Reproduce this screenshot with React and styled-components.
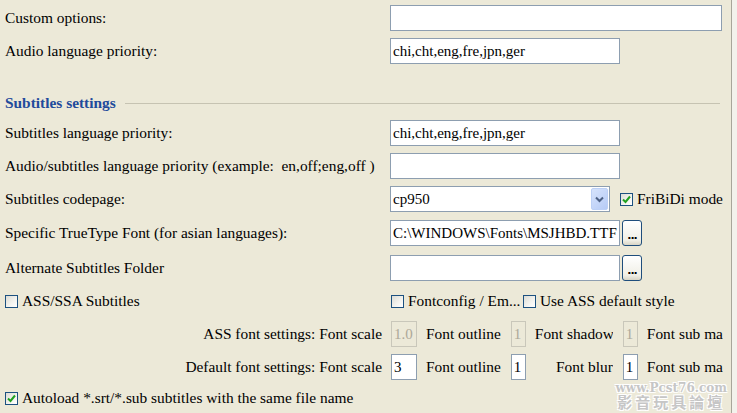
import React from 'react'
import styled, { createGlobalStyle } from 'styled-components'

const GlobalStyle = createGlobalStyle`
  html, body {
    margin: 0;
    padding: 0;
    background: #f3f2ec;
  }
  body {
    font-family: "Liberation Serif", "Times New Roman", serif;
    font-size: 15.4px;
    color: #000;
  }
`

const Panel = styled.div`
  position: relative;
  width: 732px;
  height: 413px;
  overflow: hidden;
  box-sizing: border-box;
  background: #ece9d8;
  border-right: 1px solid #a8a69a;
  padding: 5px 0 0 5px;
  display: flex;
  flex-direction: column;
  gap: 7px;
`

const Row = styled.div`
  display: flex;
  align-items: center;
  height: ${p => p.$h || 26}px;
  margin-top: ${p => p.$mt || 0}px;
  white-space: nowrap;
`

const Label = styled.div`
  width: 385px;
  flex: none;
  text-align: ${p => (p.$right ? 'right' : 'left')};
  padding-right: ${p => (p.$right ? 8 : 0)}px;
  box-sizing: border-box;
`

const Input = styled.div`
  flex: none;
  box-sizing: border-box;
  width: ${p => p.$w}px;
  height: 26px;
  border: 1px solid ${p => (p.$disabled ? '#c9c7ba' : '#8d9eb0')};
  background: ${p => (p.$disabled ? '#ece9d8' : '#fff')};
  color: ${p => (p.$disabled ? '#aca899' : '#000')};
  padding-left: 2px;
  font-size: 15px;
  line-height: 24px;
  overflow: hidden;
  margin-left: ${p => p.$ml || 0}px;
`

const Combo = styled.div`
  flex: none;
  box-sizing: border-box;
  width: 220px;
  height: 26px;
  border: 1px solid #8d9eb0;
  background: #fff;
  display: flex;
  align-items: center;
  justify-content: space-between;
  padding: 1px 1px 1px 2px;
  font-size: 15px;
`

const DropButton = styled.div`
  width: 17px;
  height: 22px;
  box-sizing: border-box;
  border: 1px solid #bcd0f6;
  border-radius: 2px;
  background: linear-gradient(135deg, #d6e3fc 0%, #b6cbf6 100%);
  display: flex;
  align-items: center;
  justify-content: center;
`

const BrowseButton = styled.div`
  flex: none;
  box-sizing: border-box;
  width: 20px;
  height: 26px;
  margin-left: 2px;
  border: 1px solid #1f4e7c;
  border-radius: 3px;
  background: linear-gradient(#ffffff, #f0efe6 80%, #d8d5c6);
  font-family: "DejaVu Sans", sans-serif;
  font-weight: bold;
  font-size: 11px;
  line-height: 30px;
  text-align: center;
  letter-spacing: -1px;
`

const CheckWrap = styled.label`
  display: flex;
  align-items: center;
  gap: 4px;
  flex: none;
  margin-left: ${p => p.$ml || 0}px;
  width: ${p => (p.$w ? `${p.$w}px` : 'auto')};
`

const Box = styled.span`
  width: 13px;
  height: 13px;
  box-sizing: border-box;
  border: 1px solid #1c5180;
  background: linear-gradient(135deg, #dcdcd5 0%, #f4f4f0 60%, #ffffff 100%);
  display: flex;
  align-items: center;
  justify-content: center;
`

const Header = styled.div`
  display: flex;
  align-items: center;
  height: 20px;
  margin-top: 22px;
  padding-right: 11px;
  color: #1f4b9c;
  font-weight: bold;
  &::after {
    content: '';
    flex: 1;
    height: 1px;
    margin-left: 9px;
    background: #c6c3b2;
  }
`

const Text = styled.span`
  flex: none;
  margin-left: ${p => p.$ml || 0}px;
  width: ${p => (p.$w ? `${p.$w}px` : 'auto')};
  text-align: ${p => (p.$right ? 'right' : 'left')};
  overflow: hidden;
`

const Watermark = styled.div`
  position: absolute;
  right: 4px;
  bottom: 2px;
  text-align: center;
  color: #c6c6c6;
  font-family: "DejaVu Serif", "Noto Sans CJK TC", serif;
  font-weight: bold;
  line-height: 15px;
  text-shadow: 1px 1px 0 #fff, -1px -1px 0 #fff, 1px -1px 0 #fff, -1px 1px 0 #fff;
  div:first-child { font-size: 12px; }
  div:last-child { font-size: 15px; letter-spacing: 3px; }
`

const Checkbox = ({ checked, children, ml, w }) => (
  <CheckWrap $ml={ml} $w={w}>
    <Box>
      {checked && (
        <svg width="9" height="9" viewBox="0 0 9 9">
          <path d="M1 4.5 L3.5 7 L8 1.5" stroke="#21a121" strokeWidth="2" fill="none" />
        </svg>
      )}
    </Box>
    <span>{children}</span>
  </CheckWrap>
)

export default function App() {
  return (
    <>
      <GlobalStyle />
      <Panel>
        <Row>
          <Label>Custom options:</Label>
          <Input $w={332} />
        </Row>
        <Row>
          <Label>Audio language priority:</Label>
          <Input $w={230}>chi,cht,eng,fre,jpn,ger</Input>
        </Row>

        <Header>Subtitles settings</Header>

        <Row>
          <Label>Subtitles language priority:</Label>
          <Input $w={230}>chi,cht,eng,fre,jpn,ger</Input>
        </Row>
        <Row>
          <Label>Audio/subtitles language priority (example:&nbsp; en,off;eng,off )</Label>
          <Input $w={230} />
        </Row>
        <Row>
          <Label>Subtitles codepage:</Label>
          <Combo>
            <span>cp950</span>
            <DropButton>
              <svg width="9" height="7" viewBox="0 0 9 7">
                <path d="M1 1.5 L4.5 5 L8 1.5" stroke="#4d6185" strokeWidth="2" fill="none" />
              </svg>
            </DropButton>
          </Combo>
          <Checkbox checked ml={10}>FriBiDi mode</Checkbox>
        </Row>
        <Row $mt={1}>
          <Label>Specific TrueType Font (for asian languages):</Label>
          <Input $w={230}>C:\WINDOWS\Fonts\MSJHBD.TTF</Input>
          <BrowseButton>...</BrowseButton>
        </Row>
        <Row $mt={2}>
          <Label>Alternate Subtitles Folder</Label>
          <Input $w={230} />
          <BrowseButton>...</BrowseButton>
        </Row>
        <Row>
          <Label>
            <Checkbox>ASS/SSA Subtitles</Checkbox>
          </Label>
          <Checkbox ml={1} w={132}>Fontconfig / Em...</Checkbox>
          <Checkbox>Use ASS default style</Checkbox>
        </Row>
        <Row>
          <Label $right>ASS font settings: Font scale</Label>
          <Input $w={26} $disabled $ml={1}>1.0</Input>
          <Text $ml={9}>Font outline</Text>
          <Input $w={15} $disabled $ml={10}>1</Input>
          <Text $ml={9} $w={78} $right>Font shadow</Text>
          <Input $w={15} $disabled $ml={10}>1</Input>
          <Text $ml={9} $w={76}>Font sub margin</Text>
        </Row>
        <Row>
          <Label $right>Default font settings: Font scale</Label>
          <Input $w={26} $ml={1}>3</Input>
          <Text $ml={9}>Font outline</Text>
          <Input $w={15} $ml={10}>1</Input>
          <Text $ml={9} $w={78} $right>Font blur</Text>
          <Input $w={15} $ml={10}>1</Input>
          <Text $ml={9} $w={76}>Font sub margin</Text>
        </Row>
        <Row $h={22}>
          <Checkbox checked>Autoload *.srt/*.sub subtitles with the same file name</Checkbox>
        </Row>
        <Watermark>
          <div>www.Pcst76.com</div>
          <div>影音玩具論壇</div>
        </Watermark>
      </Panel>
    </>
  )
}
